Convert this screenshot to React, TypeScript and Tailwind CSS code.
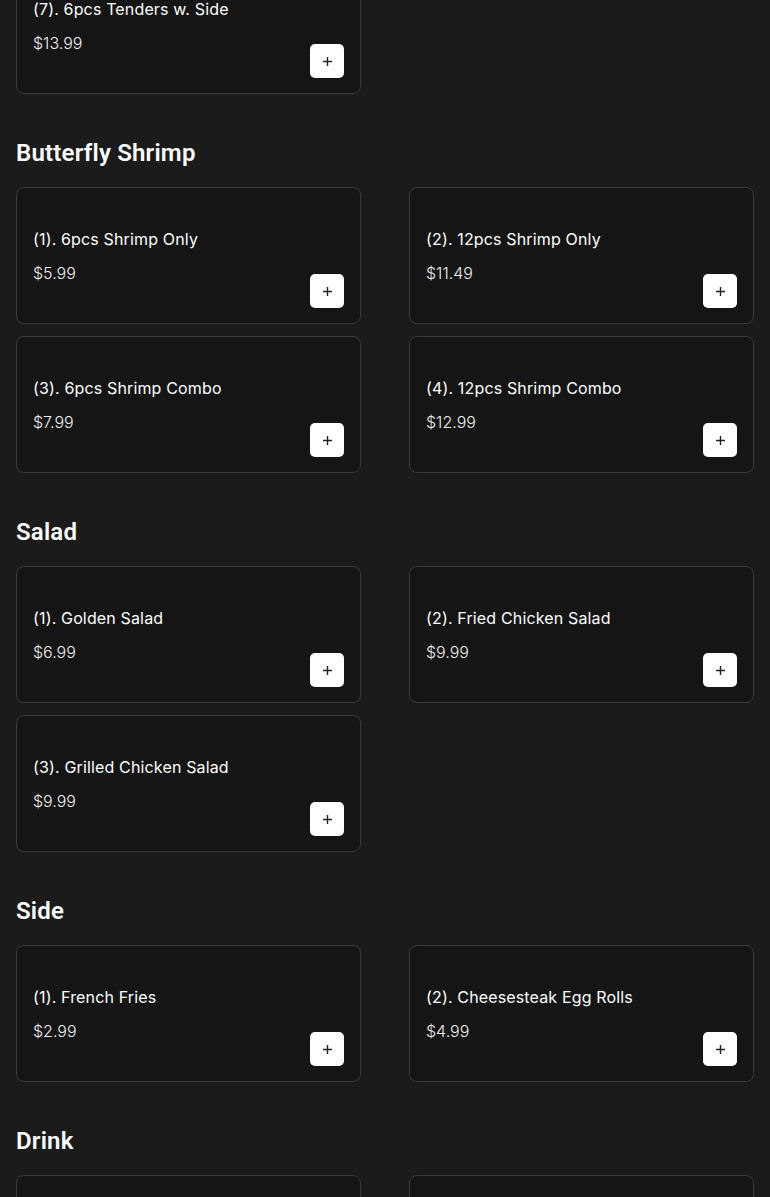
import React from "react";

type Item = { name: string; price: string };
type Section = { title?: string; items: Item[] };

const sections: Section[] = [
  { items: [{ name: "(7). 6pcs Tenders w. Side", price: "$13.99" }] },
  {
    title: "Butterfly Shrimp",
    items: [
      { name: "(1). 6pcs Shrimp Only", price: "$5.99" },
      { name: "(2). 12pcs Shrimp Only", price: "$11.49" },
      { name: "(3). 6pcs Shrimp Combo", price: "$7.99" },
      { name: "(4). 12pcs Shrimp Combo", price: "$12.99" },
    ],
  },
  {
    title: "Salad",
    items: [
      { name: "(1). Golden Salad", price: "$6.99" },
      { name: "(2). Fried Chicken Salad", price: "$9.99" },
      { name: "(3). Grilled Chicken Salad", price: "$9.99" },
    ],
  },
  {
    title: "Side",
    items: [
      { name: "(1). French Fries", price: "$2.99" },
      { name: "(2). Cheesesteak Egg Rolls", price: "$4.99" },
    ],
  },
  {
    title: "Drink",
    items: [
      { name: "", price: "" },
      { name: "", price: "" },
    ],
  },
];

function Plus() {
  return (
    <svg width="11" height="11" viewBox="0 0 11 11" fill="none">
      <path d="M5.5 1v9M1 5.5h9" stroke="#222" strokeWidth="1.4" />
    </svg>
  );
}

function Card({ item }: { item: Item }) {
  return (
    <div className="h-[137px] rounded-lg border border-[#3a3a3a] bg-[#151515] px-4 pb-[15px] flex items-end justify-between">
      <div className="flex flex-col self-start pt-[39px]">
        <div className="text-[16px] leading-[24px] font-normal text-white tracking-[0.15px]">{item.name}</div>
        <div className="mt-[10px] text-[16px] leading-[24px] font-light text-[#f0f0f0]">{item.price}</div>
      </div>
      {item.name && (
        <button className="w-[34px] h-[34px] rounded-[5px] bg-white flex items-center justify-center shrink-0">
          <Plus />
        </button>
      )}
    </div>
  );
}

export default function App() {
  return (
    <div
      className="min-h-screen bg-[#1b1b1b] overflow-hidden"
      style={{ fontFamily: "Inter, 'Open Sans', sans-serif" }}
    >
      <div className="px-4 -mt-[43px]">
        {sections.map((s, i) => (
          <div key={i} className={i > 0 ? "mt-[43px]" : ""}>
            {s.title && (
              <h2
                className="text-[24px] leading-[32px] font-semibold text-white mb-[18px] tracking-[0.2px]"
                style={{ fontFamily: "Roboto, sans-serif" }}
              >
                {s.title}
              </h2>
            )}
            <div className="grid grid-cols-2 gap-x-12 gap-y-3">
              {s.items.map((it, j) => (
                <Card key={j} item={it} />
              ))}
            </div>
          </div>
        ))}
      </div>
    </div>
  );
}
